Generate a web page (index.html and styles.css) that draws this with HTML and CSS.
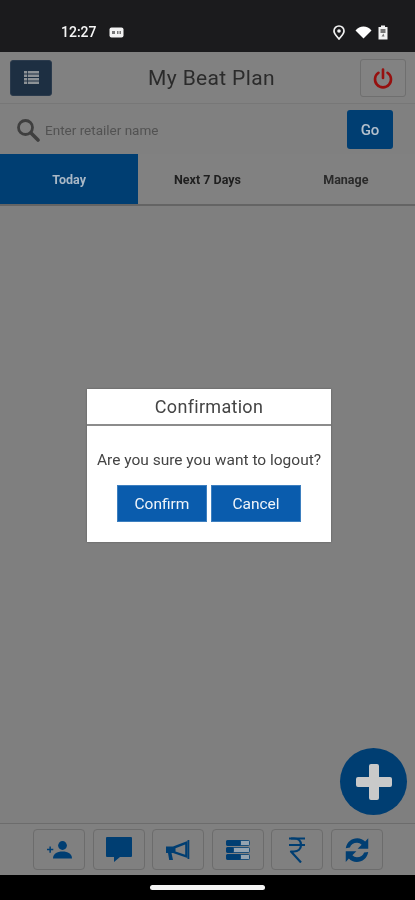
FILE: index.html
```html
<!DOCTYPE html>
<html lang="en">
<head>
  <meta charset="UTF-8"/>
  <meta name="viewport" content="width=device-width, initial-scale=1.0"/>
  <title>My Beat Plan</title>
  <link rel="stylesheet" href="styles.css">
</head>
<body>
  <div class="phone">
    <div class="status-bar">
      <span class="clock">12:27</span>
      <svg class="sim" width="15" height="11" viewBox="0 0 15 11"><rect x="0.5" y="0.5" width="14" height="10" rx="2" fill="#f2f2f2"/><rect x="3" y="4" width="3" height="3" fill="#777"/><rect x="8" y="4" width="1.5" height="3" fill="#777"/><rect x="10.5" y="4" width="1.5" height="3" fill="#777"/></svg>
      <span class="status-space"></span>
      <svg class="pin" width="12" height="15" viewBox="0 0 12 15"><path d="M6 1a5 5 0 0 0-5 5c0 3 3 5.500 5 8 2-2.500 5-5 5-8a5 5 0 0 0-5-5z" fill="none" stroke="#f2f2f2" stroke-width="1.700"/><circle cx="6" cy="6" r="1.800" fill="#f2f2f2"/></svg>
      <svg class="wifi" width="17" height="13" viewBox="0 0 17 13"><path d="M0.500 4.500C2.500 2 5.500 0.500 8.500 0.500s6 1.500 8 4L8.500 12.500z" fill="#fff"/></svg>
      <svg class="battery" width="12" height="15" viewBox="0 0 12 15"><path d="M4 0.500h4v1.500h2.500v12.500h-9v-12.500H4z" fill="#f2f2f2"/><rect x="3.500" y="4" width="5" height="4" fill="#777"/><path d="M6.500 8.500L4.500 11.500h3z" fill="#777"/></svg>
    </div>

    <div class="app">
      <header class="top-bar">
        <button class="menu-btn">
          <svg width="15" height="13" viewBox="0 0 15 13" fill="#8d9296"><rect width="15" height="2.500"/><rect y="3.500" width="15" height="2.500"/><rect y="7" width="15" height="2.500"/><rect y="10.500" width="15" height="2.500"/><rect x="3" width="0.800" height="13" fill="#1d2f42"/></svg>
        </button>
        <h1>My Beat Plan</h1>
        <button class="power-btn">
          <svg width="20" height="21" viewBox="0 0 20 21" fill="none" stroke="#96100f" stroke-width="2.600" stroke-linecap="round"><path d="M5.500 4.800a8 8 0 1 0 9 0"/><path d="M10 1.500v8.500"/></svg>
        </button>
      </header>

      <div class="search-row">
        <svg class="search-icon" width="24" height="24" viewBox="0 0 24 24" fill="none" stroke="#3f3f3f"><circle cx="9.500" cy="9.500" r="7" stroke-width="2.800"/><path d="M15 15l7 7" stroke-width="3.600" stroke-linecap="round"/></svg>
        <span class="placeholder">Enter retailer name</span>
        <button class="go-btn">Go</button>
      </div>

      <nav class="tabs">
        <div class="tab active">Today</div>
        <div class="tab">Next 7 Days</div>
        <div class="tab muted">Manage</div>
      </nav>

      <main class="content"></main>

      <footer class="bottom-bar">
        <button class="tool-btn">
          <svg width="25" height="18" viewBox="0 0 25 18" fill="#003e72"><circle cx="15.500" cy="4.500" r="4.400"/><path d="M6 17.500c0-4.800 4-7 9.500-7s9.500 2.200 9.500 7z"/><path d="M0 7.800h2.400V5.400h1.500v2.400h2.400v1.500H3.900v2.400H2.400V9.300H0z"/></svg>
        </button>
        <button class="tool-btn">
          <svg width="26" height="25" viewBox="0 0 26 25" fill="#003e72"><path d="M1 0h24a1 1 0 0 1 1 1v18a1 1 0 0 1-1 1H14l-6 5v-5H1a1 1 0 0 1-1-1V1a1 1 0 0 1 1-1z"/></svg>
        </button>
        <button class="tool-btn">
          <svg width="24" height="20" viewBox="0 0 24 20"><path d="M0 6.500h7V13H5.500l1.500 7H3.200L2 13H0z" fill="#003e72"/><path d="M7 6.500L21.500 1v17L7 13z" fill="#003e72"/><path d="M9.500 8.200l9.700-3.800v10.400l-9.700-3.400z" fill="#7f7f7f"/><rect x="21.500" y="0" width="1.800" height="19" fill="#003e72"/></svg>
        </button>
        <button class="tool-btn">
          <svg width="24" height="20" viewBox="0 0 24 20" stroke="#003e72" stroke-width="0.800"><rect x="0.500" y="0.500" width="23" height="5" rx="1" fill="#94a3b0"/><rect x="0.500" y="0.500" width="14" height="5" rx="1" fill="#003e72"/><rect x="0.500" y="7.500" width="23" height="5" rx="1" fill="#94a3b0"/><rect x="0.500" y="7.500" width="7" height="5" rx="1" fill="#003e72"/><rect x="0.500" y="14.500" width="23" height="5" rx="1" fill="#94a3b0"/><rect x="0.500" y="14.500" width="14" height="5" rx="1" fill="#003e72"/></svg>
        </button>
        <button class="tool-btn">
          <svg width="16" height="26" viewBox="0 0 16 26" fill="none" stroke="#003e72" stroke-width="2.200"><path d="M0 1.500h16M0 8h16"/><path d="M2 1.500h3c4.500 0 7 2.500 7 6.500s-3 6.500-7 6.500H2L12 25.500" stroke-linejoin="round"/></svg>
        </button>
        <button class="tool-btn">
          <svg width="30" height="30" viewBox="0 0 24 24" fill="#003e72"><path d="M3 10.500C4 5.500 7.500 2.500 12.200 2.500c2.600 0 4.800 1 6.300 2.700L21 2.500v8.500h-8.500l3.200-3.200c-1-1-2.200-1.600-3.600-1.600-2.900 0-5 1.500-5.800 3.800z"/><path d="M21 13.500c-1 5-4.500 8-9.200 8-2.600 0-4.800-1-6.300-2.700L3 21.500V13h8.500l-3.200 3.200c1 1 2.200 1.600 3.600 1.600 2.900 0 5-1.500 5.800-3.800z"/></svg>
        </button>
      </footer>

      <button class="fab">
        <svg width="36" height="36" viewBox="0 0 36 36" fill="#c9c9c9"><path d="M15 0h6a2 2 0 0 1 2 2v11h11a2 2 0 0 1 2 2v6a2 2 0 0 1-2 2H23v11a2 2 0 0 1-2 2h-6a2 2 0 0 1-2-2V23H2a2 2 0 0 1-2-2v-6a2 2 0 0 1 2-2h11V2a2 2 0 0 1 2-2z"/></svg>
      </button>

      <div class="dialog-wrap">
        <div class="dialog">
          <div class="dialog-title">Confirmation</div>
          <p class="dialog-text">Are you sure you want to logout?</p>
          <div class="dialog-actions">
            <button class="dialog-btn">Confirm</button>
            <button class="dialog-btn">Cancel</button>
          </div>
        </div>
      </div>
    </div>

    <div class="nav-bar"><span class="home-pill"></span></div>
  </div>
</body>
</html>
```

FILE: styles.css
```css
html, body {
  margin:0;
  padding:0;
  height:100%;
  overflow:hidden;
}
body {
  background:#000;
  font-family:Roboto,'Liberation Sans',Arial,sans-serif;
}
button {
  font-family:inherit;
  padding:0;
  cursor:pointer;
}
.phone {
  width:415px;
  height:900px;
  display:flex;
  flex-direction:column;
  filter:blur(0.4px);
}

/* status bar */
.status-bar {
  height:52px;
  box-sizing:border-box;
  flex:none;
  background:#1b1b1d;
  display:flex;
  align-items:center;
  padding:12px 26px 0 61px;
}
.clock {
  color:#f5f5f5;
  font-size:14px;
  font-weight:500;
  margin-right:12px;
}
.status-space { flex:1; }
.pin { margin-right:1px; }
.wifi { margin-left:9px; }
.battery { margin-left:5px; }

/* app */
.app {
  flex:1;
  position:relative;
  display:flex;
  flex-direction:column;
  background:#7f7f7f;
  min-height:0;
}
.top-bar {
  height:52px;
  flex:none;
  box-sizing:border-box;
  display:flex;
  align-items:center;
  justify-content:space-between;
  padding:0 9px 0 10px;
  background:#818181;
  border-bottom:1px solid #777;
}
.top-bar h1 {
  margin:0 0 0 11px;
  font-size:21px;
  font-weight:400;
  color:#2b2b2b;
  letter-spacing:0.35px;
}
.menu-btn {
  width:42px;
  height:36px;
  background:#1d2f42;
  border:1px solid #2a3a4c;
  border-radius:3px;
  display:flex;
  align-items:center;
  justify-content:center;
}
.power-btn {
  width:46px;
  height:38px;
  background:#828282;
  border:1px solid #6f6f6f;
  border-radius:3px;
  display:flex;
  align-items:center;
  justify-content:center;
  padding-top:2px;
}
.search-row {
  height:50px;
  flex:none;
  box-sizing:border-box;
  display:flex;
  align-items:center;
  padding:1px 22px 0 16px;
  background:#808080;
}
.placeholder {
  flex:1;
  font-size:13.500px;
  color:#525252;
  margin-left:5px;
}
.go-btn {
  width:46px;
  height:39px;
  background:#003e72;
  border:none;
  border-radius:3px;
  color:#b4c0cc;
  font-size:15px;
  font-weight:500;
}
.tabs {
  height:52px;
  flex:none;
  box-sizing:border-box;
  display:flex;
  background:#818181;
  border-bottom:2px solid #646464;
}
.tab {
  width:138.500px;
  display:flex;
  align-items:center;
  justify-content:center;
  font-size:12.500px;
  font-weight:700;
  color:#1f1f1f;
}
.tab.active {
  background:#003e72;
  color:#a9b8c6;
}
.tab.muted { color:#2a2a2a; }
.content { flex:1; }
.bottom-bar {
  height:52px;
  flex:none;
  box-sizing:border-box;
  display:flex;
  align-items:flex-start;
  padding:5px 0 0 33px;
  gap:7.500px;
  background:#808080;
  border-top:1px solid #6c6c6c;
}
.tool-btn {
  width:52px;
  height:41px;
  background:#808080;
  border:1px solid #6c6c6c;
  border-radius:4px;
  display:flex;
  align-items:center;
  justify-content:center;
}

/* floating add button */
.fab {
  position:absolute;
  right:8px;
  bottom:60px;
  width:67px;
  height:67px;
  border-radius:50%;
  border:none;
  background:#003e72;
  display:flex;
  align-items:center;
  justify-content:center;
}

/* logout dialog */
.dialog-wrap {
  position:absolute;
  inset:0;
  display:flex;
  justify-content:center;
  padding:337px 0 0 3px;
  box-sizing:border-box;
  pointer-events:none;
}
.dialog {
  width:244px;
  height:153px;
  background:#fff;
  box-shadow:0 0 2px rgba(0,0,0,0.3);
}
.dialog-title {
  height:35px;
  box-sizing:border-box;
  display:flex;
  align-items:center;
  justify-content:center;
  font-size:18px;
  color:#444;
  letter-spacing:0.3px;
}
.dialog-text {
  margin:0;
  border-top:2px solid #8c8c8c;
  padding-top:25px;
  height:61px;
  box-sizing:border-box;
  line-height:19px;
  text-align:center;
  font-size:15.500px;
  color:#444;
  white-space:nowrap;
}
.dialog-actions {
  display:flex;
  justify-content:center;
  gap:4px;
}
.dialog-btn {
  width:90px;
  height:37px;
  background:#0a5cad;
  border:1px solid #3d7fbf;
  color:#f0f5fa;
  font-size:15.500px;
}

/* gesture nav */
.nav-bar {
  height:25px;
  flex:none;
  background:#000;
  display:flex;
  justify-content:center;
  padding-top:10px;
  box-sizing:border-box;
}
.home-pill {
  width:115px;
  height:5px;
  border-radius:3px;
  background:#f5f5f5;
}
```
